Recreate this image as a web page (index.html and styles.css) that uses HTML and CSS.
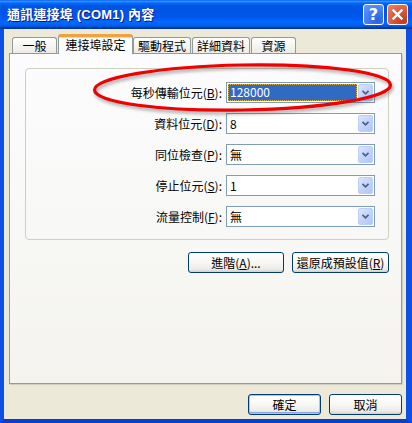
FILE: index.html
```html
<!DOCTYPE html>
<html lang="zh-Hant">
<head>
<meta charset="utf-8">
<title>通訊連接埠 (COM1) 內容</title>
<link rel="stylesheet" href="styles.css">
</head>
<body>
<div class="window">
  <div class="titlebar">
    <span class="title">通訊連接埠 (COM1) 內容</span>
    <div class="caption-btns">
      <span class="cbtn help">?</span>
      <span class="cbtn close"><svg width="19" height="19" viewBox="0 0 19 19"><path d="M5.5 5.5 L13.5 13.5 M13.5 5.5 L5.5 13.5" stroke="#fff" stroke-width="2.4" stroke-linecap="square"/></svg></span>
    </div>
  </div>
  <div class="frame">
    <div class="tabs">
      <div class="tab short">一般</div>
      <div class="tab active">連接埠設定</div>
      <div class="tab">驅動程式</div>
      <div class="tab">詳細資料</div>
      <div class="tab short">資源</div>
    </div>
    <div class="panel">
      <div class="group">
        <div class="row">
          <span class="lbl">每秒傳輸位元(<u>B</u>):</span>
          <div class="combo"><span class="val sel">128000</span><span class="drop"><svg width="15" height="15" viewBox="0 0 15 15"><path d="M4 5.5 L7.5 9 L11 5.5" fill="none" stroke="#4D6185" stroke-width="2"/></svg></span></div>
        </div>
        <div class="row">
          <span class="lbl">資料位元(<u>D</u>):</span>
          <div class="combo"><span class="val">8</span><span class="drop"><svg width="15" height="15" viewBox="0 0 15 15"><path d="M4 5.5 L7.5 9 L11 5.5" fill="none" stroke="#4D6185" stroke-width="2"/></svg></span></div>
        </div>
        <div class="row">
          <span class="lbl">同位檢查(<u>P</u>):</span>
          <div class="combo"><span class="val">無</span><span class="drop"><svg width="15" height="15" viewBox="0 0 15 15"><path d="M4 5.5 L7.5 9 L11 5.5" fill="none" stroke="#4D6185" stroke-width="2"/></svg></span></div>
        </div>
        <div class="row">
          <span class="lbl">停止位元(<u>S</u>):</span>
          <div class="combo"><span class="val">1</span><span class="drop"><svg width="15" height="15" viewBox="0 0 15 15"><path d="M4 5.5 L7.5 9 L11 5.5" fill="none" stroke="#4D6185" stroke-width="2"/></svg></span></div>
        </div>
        <div class="row">
          <span class="lbl">流量控制(<u>F</u>):</span>
          <div class="combo"><span class="val">無</span><span class="drop"><svg width="15" height="15" viewBox="0 0 15 15"><path d="M4 5.5 L7.5 9 L11 5.5" fill="none" stroke="#4D6185" stroke-width="2"/></svg></span></div>
        </div>
      </div>
      <div class="panel-actions">
        <button class="btn adv">進階(<u>A</u>)...</button>
        <button class="btn reset">還原成預設值(<u>R</u>)</button>
      </div>
    </div>
    <div class="dialog-actions">
      <button class="btn ok">確定</button>
      <button class="btn cancel">取消</button>
    </div>
  </div>
  <svg class="annotation" width="412" height="423" viewBox="0 0 412 423">
    <ellipse class="ring-shadow" cx="244" cy="90" rx="148" ry="22.5" transform="rotate(-1 244 90)"/>
    <ellipse class="ring" cx="242.5" cy="87.5" rx="148" ry="22.5" transform="rotate(-1 242.5 87.5)"/>
  </svg>
</div>
</body>
</html>
```

FILE: styles.css
```css
* { box-sizing: border-box; }
html, body { margin: 0; padding: 0; }
body {
  width: 412px;
  height: 423px;
  overflow: hidden;
  font-family: "Noto Sans CJK TC", "Liberation Sans", sans-serif;
  font-size: 12px;
  color: #000;
  background: #0A47DA;
}
u { text-decoration: underline; text-underline-offset: 1px; }

.window {
  position: relative;
  width: 412px;
  height: 423px;
  display: flex;
  flex-direction: column;
}

.titlebar {
  height: 29px;
  flex: none;
  display: flex;
  align-items: center;
  padding: 0 4px 0 7px;
  background: linear-gradient(to bottom, #0058EE 0%, #3593FF 4%, #288EFF 6%, #127DFF 8%, #036FFC 10%, #0262EE 14%, #0057E5 20%, #0054E3 24%, #0055EB 56%, #005BF5 66%, #026AFE 76%, #0062EF 86%, #0052D6 92%, #0040AB 94%, #003092 100%);
}
.title {
  color: #fff;
  font-family: "Liberation Sans", "Noto Sans CJK TC", sans-serif;
  font-weight: bold;
  font-size: 13px;
  line-height: 16px;
  text-shadow: 1px 1px 0 #0A1883;
  letter-spacing: 0.2px;
}
.caption-btns {
  margin-left: auto;
  display: flex;
  gap: 3px;
}
.cbtn {
  width: 21px;
  height: 21px;
  border: 1px solid #fff;
  border-radius: 3px;
  display: flex;
  align-items: center;
  justify-content: center;
  color: #fff;
}
.help {
  background: radial-gradient(circle at 70% 80%, #2663DE 0%, #3B78F0 40%, #6A9AF7 100%);
  font-family: "DejaVu Sans", sans-serif;
  font-weight: bold;
  font-size: 16px;
  line-height: 19px;
}
.close {
  background: radial-gradient(circle at 80% 85%, #C33B1B 0%, #DA5434 45%, #EA8A6C 100%);
}

.frame {
  flex: 1;
  display: flex;
  flex-direction: column;
  background: #ECE9D8;
  border-left: 4px solid #0C50E6;
  border-right: 6px solid #0C50E6;
  border-bottom: 4px solid #0A3FCB;
  padding: 5px 4px 4px 5px;
}

.tabs {
  height: 19px;
  flex: none;
  display: flex;
  align-items: flex-end;
  padding-left: 3px;
  position: relative;
  z-index: 2;
}
.tab {
  height: 16px;
  padding: 0 4px;
  margin-right: 1px;
  border: 1px solid #919B9C;
  border-bottom: none;
  border-radius: 3px 3px 0 0;
  background: linear-gradient(to bottom, #FFFFFF 0%, #F7F7F4 40%, #ECEBE6 100%);
  line-height: 15px;
  text-align: center;
  white-space: nowrap;
}
.tab.short { min-width: 45px; }
.tab.active {
  height: 20px;
  margin-bottom: -1px;
  margin-right: 0;
  padding: 0 6px;
  min-width: 75px;
  border-top: 3px solid #FFC83C;
  border-color: #E68B2C #919B9C #919B9C #919B9C;
  border-top-color: #F0A33A;
  background: #FCFCFE;
  line-height: 15px;
  box-shadow: inset 0 1px 0 #FFD979;
}

.panel {
  height: 331px;
  flex: none;
  border: 1px solid #919B9C;
  background: linear-gradient(to bottom, #FCFCFE 0%, #F8F8F6 50%, #F4F3EE 100%);
  box-shadow: 1px 1px 0 #D0CEBF;
  padding: 14px 12px 0 15px;
  display: flex;
  flex-direction: column;
}

.group {
  height: 172px;
  border: 1px solid #D0D0BF;
  border-radius: 4px;
  padding: 13px 13px 0 0;
  display: flex;
  flex-direction: column;
  gap: 10px;
}
.row {
  height: 21px;
  display: flex;
  align-items: center;
  justify-content: flex-end;
  gap: 4px;
}
.lbl { line-height: 16px; white-space: nowrap; }
.combo {
  width: 149px;
  height: 21px;
  border: 1px solid #7F9DB9;
  background: #fff;
  display: flex;
  align-items: stretch;
}
.val {
  flex: 1;
  padding-left: 3px;
  line-height: 19px;
}
.val.sel {
  margin: 1px 1px 1px 1px;
  padding-left: 2px;
  background: #316AC5;
  color: #fff;
  line-height: 15px;
  outline: 1px dotted #E2B24A;
  outline-offset: -1px;
}
.drop {
  width: 15px;
  margin: 1px 1px 1px 0;
  border: 1px solid #BCCFF9;
  border-radius: 2px;
  background: linear-gradient(135deg, #DAE5FE 0%, #C3D4FB 50%, #B0C6F5 100%);
  display: flex;
  align-items: center;
  justify-content: center;
}

.btn {
  height: 21px;
  border: 1px solid #003C74;
  border-radius: 3px;
  background: linear-gradient(to bottom, #FFFFFF 0%, #F7F7F4 50%, #ECEBE6 85%, #D6D0C5 100%);
  font-family: "Noto Sans CJK TC", "Liberation Sans", sans-serif;
  font-size: 12px;
  line-height: 17px;
  color: #000;
  padding: 0;
  margin: 0;
}
.panel-actions {
  margin-top: 12px;
  display: flex;
  justify-content: flex-end;
  gap: 8px;
}
.adv { width: 96px; }
.reset { width: 97px; }

.dialog-actions {
  margin-top: 10px;
  display: flex;
  justify-content: flex-end;
  gap: 8px;
}
.ok, .cancel { width: 73px; }
.ok { box-shadow: inset 0 0 0 1px #A8C4F0, inset 0 -1px 0 1px #8AA7E6; }

.annotation {
  position: absolute;
  left: 0;
  top: 0;
  pointer-events: none;
}
.ring-shadow {
  fill: none;
  stroke: rgba(60, 60, 60, 0.35);
  stroke-width: 4;
  filter: blur(1.5px);
}
.ring {
  fill: none;
  stroke: #F00000;
  stroke-width: 3.2;
}
```
